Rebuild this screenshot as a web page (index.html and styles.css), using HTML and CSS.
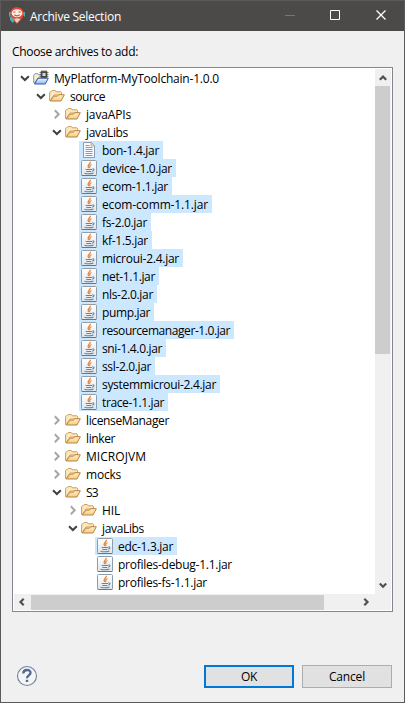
FILE: index.html
```html
<!DOCTYPE html>
<html lang="en">
<head>
<meta charset="utf-8">
<title>Archive Selection</title>
<link rel="stylesheet" href="styles.css">
</head>
<body>
<svg class="defs" aria-hidden="true">
  <defs>
    <linearGradient id="gold" x1="0" y1="0" x2="0" y2="1"><stop offset="0" stop-color="#fff0c8"/><stop offset="1" stop-color="#f3cd86"/></linearGradient>
    <linearGradient id="blue" x1="0" y1="0" x2="0" y2="1"><stop offset="0" stop-color="#eef6ff"/><stop offset="1" stop-color="#8fb6ee"/></linearGradient>
    <linearGradient id="tile" x1="0" y1="0" x2="0" y2="1"><stop offset="0" stop-color="#ffffff"/><stop offset="1" stop-color="#e0e6ec"/></linearGradient>
  </defs>
  <symbol id="down" viewBox="0 0 10 10"><path d="M1 3.200 4.900 7l3.900-3.800" fill="none" stroke="#404040" stroke-width="2"/></symbol>
  <symbol id="right" viewBox="0 0 10 10"><path d="M2.800 1.300 6.700 5.300 2.800 9.300" fill="none" stroke="#a6a6a6" stroke-width="2"/></symbol>
  <symbol id="folder" viewBox="0 0 16 16">
    <path d="M.6 12.500V4.500L1.800 3.500h.7l.7-1h3l.9 1.300h4.700l.8.900V7H5l-3.600 5.500z" fill="#fbe8bd" stroke="#cf9c5c"/>
    <path d="M1.200 13 5 8.200h3.400l1.200-1.500h5.700L12 13z" fill="url(#gold)" stroke="#bd823f"/>
  </symbol>
  <symbol id="platform" viewBox="0 0 16 16">
    <path d="M.7 12.800V5.300L2 3.700h3L6 5h6.500v3H5l-3.300 4.800z" fill="#fff0bd" stroke="#7897c8"/>
    <path d="M1.500 14 5 8.200h10.300l-3 5.800z" fill="url(#blue)" stroke="#315bb0"/>
    <path d="M9 0v9M11 0v9M13 0v9M6.500 2.500h9M6.500 4.500h9M6.500 6.500h9" stroke="#777" stroke-width=".9"/>
    <path d="M7.700 1.200h6.600v6.600H7.700z" fill="#484848"/>
    <path d="M9.500 3h3v3h-3z" fill="#d9d9d9"/>
  </symbol>
  <symbol id="jar" viewBox="0 0 16 16">
    <rect x=".5" y=".5" width="15" height="15" rx="1" fill="url(#tile)" stroke="#8e9dab"/>
    <path d="M.8 15.500h14.500" stroke="#66798b"/>
    <path d="M9.500 1.800C9.700 4 5.500 4.600 7.700 8M10.500 4.500C8 5.500 8.700 6.300 8.600 8.200" fill="none" stroke="#e58a45" stroke-width="1.300"/>
    <path d="M4.700 9.500h6.300M5.300 11.500h5M3.500 13.200c2.500.7 6.500.7 9-.2M11.200 9c2.400-.4 2.200 1.600.1 2.100" fill="none" stroke="#66859d" stroke-width="1.100"/>
  </symbol>
  <symbol id="file" viewBox="0 0 16 16">
    <path d="M2.500.5h7.800l3.200 3.200v11.800h-11z" fill="#f7fbff" stroke="#8e9bb4"/>
    <path d="M10 .7V4h3.300" fill="#ead6a0" stroke="#b8a473" stroke-width=".8"/>
    <path d="M4.500 3.500h4M4.500 5.500h7M4.500 7.500h7M4.500 9.500h7M4.500 11.500h7M4.500 13.500h7" stroke="#7c9bd0"/>
  </symbol>
</svg>
<div class="window">
  <header class="titlebar">
    <svg class="app-icon" viewBox="0 0 16 18">
      <path d="M0 5h2l-.5 4L0 10zM14 5h2v5l-2-2zM1 9.500l5 2.500-2 4-3-3z" fill="#56a9b8"/>
      <path d="M8 .3c4 0 7 2.600 6.600 6.700C14.300 11 10.500 14.500 8 17 5.500 14.500 1.700 11 1.400 7 1 2.900 4 .3 8 .3z" fill="#e7472b"/>
      <ellipse cx="8" cy="6.200" rx="5.300" ry="4" fill="#f8eee8"/>
      <path d="M4.200 5h2.300M9.500 5h2.300M5.300 7.800q2.700 2 5.400 0" fill="none" stroke="#d84c35" stroke-width="1.200"/>
      <path d="M4.500 12 8 11.200l3.500.8L8 16z" fill="#ebcfc5"/>
      <path d="M1.500 9.500 6 12l-1.700 2.500-2.500-2z" fill="#56a9b8"/>
    </svg>
    <h1 class="fit" data-width="91">Archive Selection</h1>
    <svg class="controls" viewBox="0 0 120 30" fill="none">
      <path d="M0 14.500h10" stroke="#777573"/>
      <path d="M45.500 9.500h9v9h-9z" stroke="#fff"/>
      <path d="m91.500 9.500 9 9m0-9-9 9" stroke="#fff" stroke-width="1.300"/>
    </svg>
  </header>
  <main>
    <p class="prompt"><span class="fit" data-width="126">Choose archives to add:</span></p>
    <div class="tree-box">
      <div class="tree" id="tree"></div>
      <div class="vbar">
        <svg class="arrow" viewBox="0 0 8 8"><path d="M.8 5.800 4 2.600l3.200 3.200"/></svg>
        <div class="vthumb"></div>
        <svg class="arrow" viewBox="0 0 8 8"><path d="M.8 2.500 4 5.700l3.200-3.200"/></svg>
      </div>
      <div class="hbar">
        <svg class="arrow" viewBox="0 0 8 8"><path d="M5.700.8 2.500 4l3.200 3.200"/></svg>
        <div class="hthumb"></div>
        <svg class="arrow" viewBox="0 0 8 8"><path d="M2.300.8 5.500 4 2.300 7.200"/></svg>
      </div>
    </div>
    <footer>
      <svg class="help" viewBox="0 0 22 22"><circle cx="11" cy="11" r="9.500" fill="#f5f5f5" stroke="#6d82a1" stroke-width="1.100"/><path d="M7.300 8.500C7.200 3.900 14.700 4 14.500 7.800c-.2 2.600-3.500 2.500-3.500 5.400" fill="none" stroke="#536b8f" stroke-width="2.300"/><path d="M9.800 14.800h2.400V17H9.800z" fill="#536b8f"/></svg>
      <button class="primary"><span class="fit" data-width="16">OK</span></button>
      <button><span class="fit" data-width="36">Cancel</span></button>
    </footer>
  </main>
</div>
<script src="tree.js"></script>
</body>
</html>
```
FILE: styles.css
```css
* { box-sizing: border-box; }
body { margin: 0; font: 12px/18px "Open Sans", "Noto Sans", sans-serif; color: #000; }
.defs { position: absolute; width: 0; height: 0; }
.window { width: 405px; height: 703px; border: 1px solid #5a5a5a; background: #f0f0f0; overflow: hidden; }
.titlebar { height: 30px; display: flex; align-items: center; background: #4c4a48; color: #fff; padding-left: 12px; padding-left: 8px; }
.app-icon { width: 16px; height: 18px; margin-right: 5px; }
h1 { font-size: 12px; line-height: 18px; font-weight: 400; margin: 0; padding-top: 1px; flex: 1; }
.controls { width: 120px; height: 30px; flex: none; margin-right: -1px; }
main { padding: 12px 11px 0; }
.prompt { margin: 0 0 6px; height: 18px; }
.fit { white-space: nowrap; }
.tree-box { width: 381px; height: 545px; border: 1px solid #828790; padding: 1px; background: #fff; display: grid; grid-template: 525px 16px / 361px 16px; }
.tree { overflow: hidden; }
.row { display: flex; align-items: center; height: 18px; }
.level-0 { padding-left: 6px; }
.level-1 { padding-left: 22px; }
.level-2 { padding-left: 38px; }
.level-3 { padding-left: 54px; }
.level-4 { padding-left: 70px; }
.twisty { width: 10px; height: 10px; margin-right: 1px; flex: none; }
.item { display: flex; align-items: center; height: 18px; padding: 0 4px 0 2px; }
.item .fit { padding-top: 1px; }
.selected { background: #cce8ff; }
.icon { width: 16px; height: 16px; margin-right: 5px; flex: none; }
.vbar { display: flex; flex-direction: column; align-items: center; justify-content: space-between; background: #f0f0f0; height: 525px; padding: 5px 1px 5px 0; }
.arrow { width: 8px; height: 8px; flex: none; fill: none; stroke: #505050; stroke-width: 2.200; }
.vthumb { width: 15px; height: 268px; background: #cdcdcd; margin: 4px 0 auto; }
.hbar { grid-column: 1 / 3; display: flex; align-items: center; background: #f0f0f0; padding: 0 21px 0 4px; }
.hthumb { width: 293px; height: 15px; background: #cdcdcd; margin: 0 auto 0 5px; }
footer { display: flex; align-items: center; margin-top: 51px; padding: 0 1px 0 4px; height: 26px; }
.help { width: 22px; height: 22px; margin-right: auto; margin-top: -1px; }
button { width: 90px; height: 23px; border: 1px solid #adadad; background: #e1e1e1; padding: 1px 0 0; font: inherit; color: #000; line-height: 18px; }
.primary { border: 2px solid #0078d7; margin-right: 8px; }
```
FILE: tree.js
```js
// level, icon, twisty, label, label width, selected
const rows = [
  [0, "platform", "down", "MyPlatform-MyToolchain-1.0.0", 165],
  [1, "folder", "down", "source", 35],
  [2, "folder", "right", "javaAPIs", 45],
  [2, "folder", "down", "javaLibs", 42],
  [3, "file", "", "bon-1.4.jar", 57, true],
  [3, "jar", "", "device-1.0.jar", 70, true],
  [3, "jar", "", "ecom-1.1.jar", 66, true],
  [3, "jar", "", "ecom-comm-1.1.jar", 106, true],
  [3, "jar", "", "fs-2.0.jar", 45, true],
  [3, "jar", "", "kf-1.5.jar", 46, true],
  [3, "jar", "", "microui-2.4.jar", 77, true],
  [3, "jar", "", "net-1.1.jar", 53, true],
  [3, "jar", "", "nls-2.0.jar", 51, true],
  [3, "jar", "", "pump.jar", 48, true],
  [3, "jar", "", "resourcemanager-1.0.jar", 128, true],
  [3, "jar", "", "sni-1.4.0.jar", 60, true],
  [3, "jar", "", "ssl-2.0.jar", 49, true],
  [3, "jar", "", "systemmicroui-2.4.jar", 114, true],
  [3, "jar", "", "trace-1.1.jar", 62, true],
  [2, "folder", "right", "licenseManager", 83],
  [2, "folder", "right", "linker", 29],
  [2, "folder", "right", "MICROJVM", 60],
  [2, "folder", "right", "mocks", 35],
  [2, "folder", "down", "S3", 12],
  [3, "folder", "right", "HIL", 18],
  [3, "folder", "down", "javaLibs", 42],
  [4, "jar", "", "edc-1.3.jar", 55, true],
  [4, "jar", "", "profiles-debug-1.1.jar", 114],
  [4, "jar", "", "profiles-fs-1.1.jar", 89]
];

document.getElementById("tree").innerHTML = rows.map(([level, icon, twisty, label, width, selected]) =>
  `<div class="row level-${level}">
    <svg class="twisty">${twisty ? `<use href="#${twisty}"/>` : ""}</svg>
    <div class="item${selected ? " selected" : ""}"><svg class="icon"><use href="#${icon}"/></svg><span class="fit" data-width="${width}">${label}</span></div>
  </div>`).join("");

// Spread each label's letters over its own width.
for (const el of document.querySelectorAll(".fit")) {
  const range = document.createRange();
  range.selectNodeContents(el);
  const natural = range.getBoundingClientRect().width;
  el.style.letterSpacing = (el.dataset.width - natural) / el.textContent.length + "px";
}
```
